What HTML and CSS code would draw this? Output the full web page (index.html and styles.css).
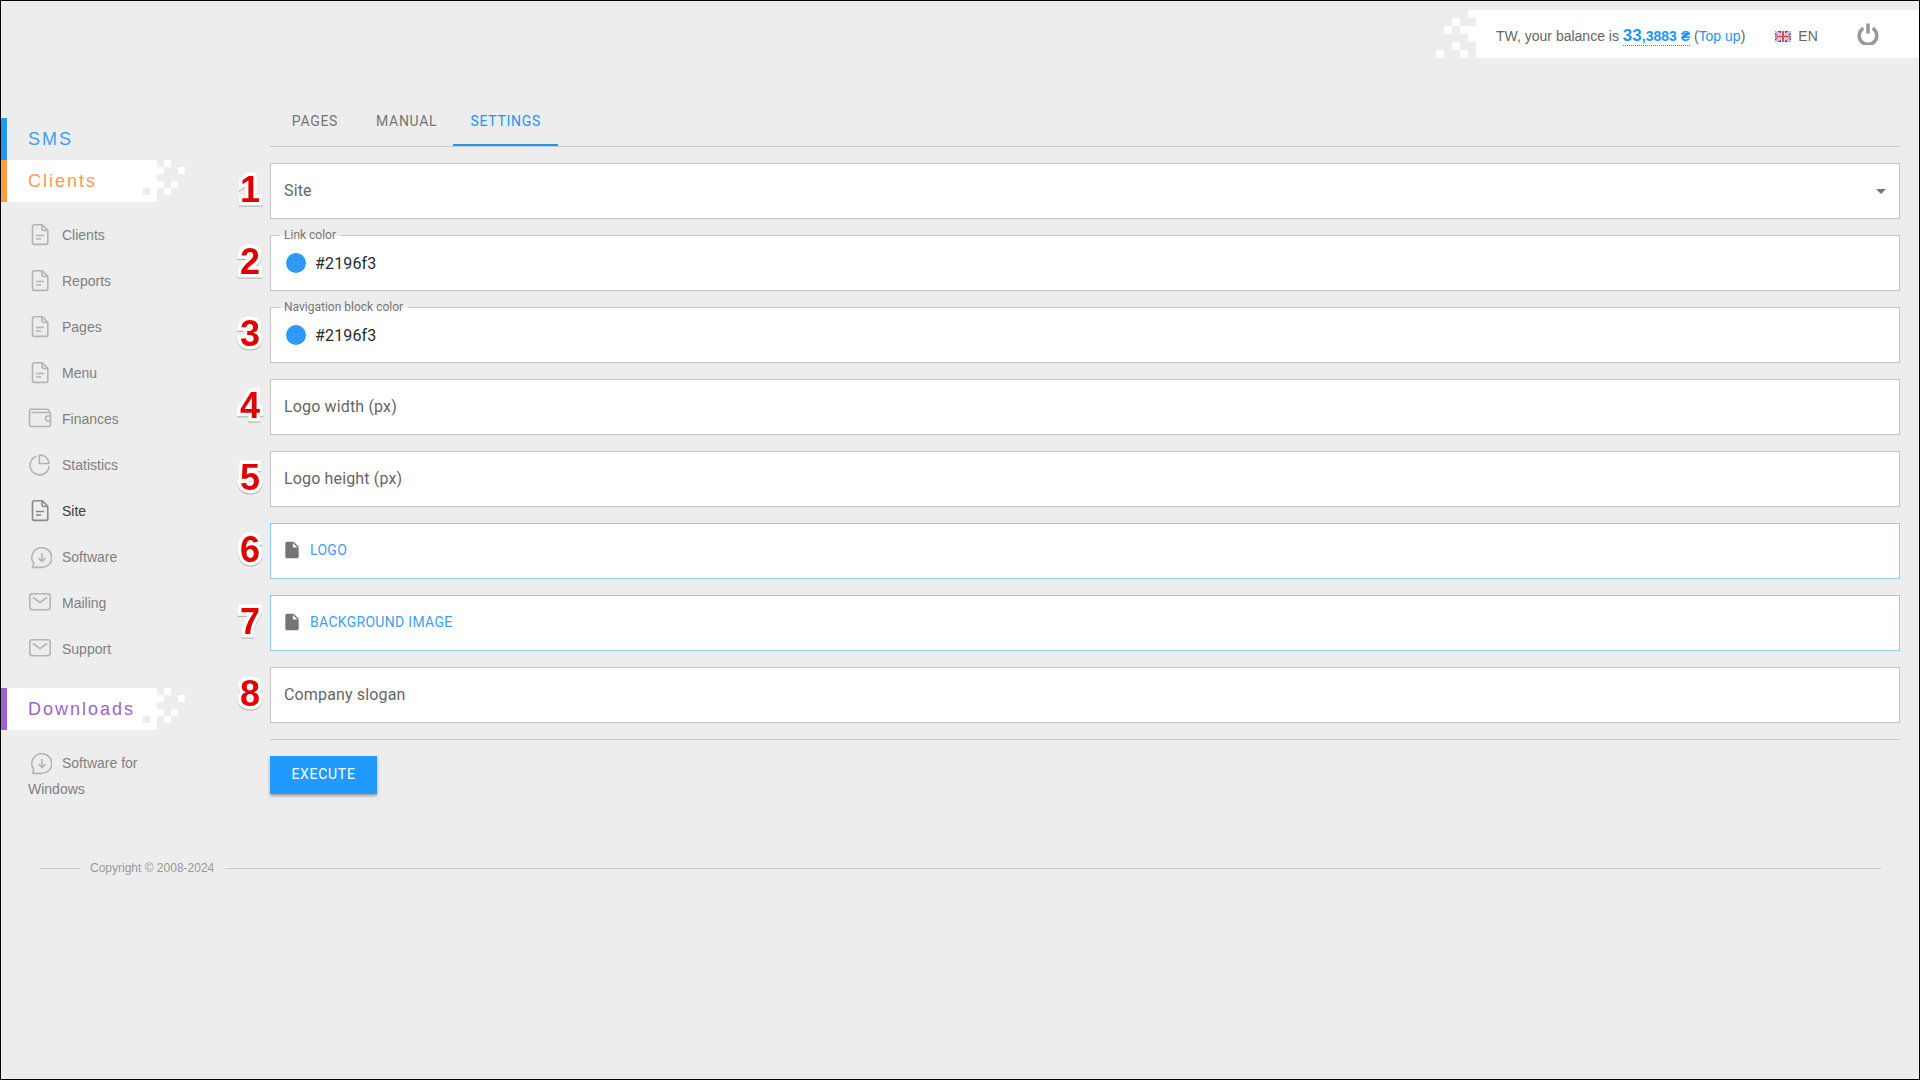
FILE: index.html
```html
<!DOCTYPE html>
<html lang="en">
<head>
<meta charset="utf-8">
<title>Site settings</title>
<link rel="stylesheet" href="styles.css">
</head>
<body>
<svg class="defs" aria-hidden="true">
  <symbol id="i-doc" viewBox="0 0 24 24"><path d="M6.5 1.8h7.7l5.6 5.6v12a2 2 0 0 1-2 2H6.500a2 2 0 0 1-2-2V3.800a2 2 0 0 1 2-2z"/><path d="M14 2v3.500a2 2 0 0 0 2 2h3.500"/><path d="M8 12.500h8M8 16h5"/></symbol>
  <symbol id="i-wallet" viewBox="0 0 24 24"><path d="M3 2.200h16a2 2 0 0 1 2 2V6"/><path d="M3.500 5.500H21a1.500 1.500 0 0 1 1.500 1.500v10.500a2 2 0 0 1-2 2h-17a2 2 0 0 1-2-2V4a2 2 0 0 1 2-2"/><path d="M22.500 9h-2.500a2 2 0 0 0 0 5h2.500"/></symbol>
  <symbol id="i-pie" viewBox="0 0 24 24"><path d="M8.300 3.300A9.600 9.600 0 1 0 21.200 13"/><path d="M11.300 2.200a8.800 8.800 0 0 1 9.700 8.300h-9.700z"/></symbol>
  <symbol id="i-down" viewBox="0 0 24 24"><path d="M14 2.800a9.800 9.800 0 0 1 0 19.600H5.500a1 1 0 0 1-.8-1.500l1.200-2.300A9.800 9.800 0 0 1 14 2.800z"/><path d="M14 8v8.500M10.500 13l3.500 3.500 3.500-3.500"/></symbol>
  <symbol id="i-mail" viewBox="0 0 24 24"><rect x="1.800" y="2.800" width="20.400" height="16" rx="2.500"/><path d="M5 6.500l7 5 7-5"/></symbol>
</svg>

<div class="page">
  <header class="topbar">
    <svg class="top-pixels" width="40" height="48" viewBox="0 0 40 48" aria-hidden="true">
      <path fill="#fff" d="M32 0h8v8h-8zM16 8h8v8h-8zM8 16h8v8H8zM24 16h16v8H24zM32 24h8v8h-8zM16 32h8v8h-8zM24 40h8v8h-8zM0 40h8v8H0z"/>
    </svg>
    <div class="top-panel">
      <span class="balance">TW, your balance is <a class="amount"><b class="amount-big">33</b><b>,3883 ₴</b></a> (<a class="topup">Top up</a>)</span>
      <svg class="flag" width="16" height="11" viewBox="0 0 16 11" aria-hidden="true">
        <rect width="16" height="11" fill="#3f51a5"/>
        <path d="M0 0l16 11M16 0L0 11" stroke="#fff" stroke-width="2.400"/>
        <path d="M0 0l16 11M16 0L0 11" stroke="#e8465a" stroke-width=".8"/>
        <path d="M8 0v11M0 5.500h16" stroke="#fff" stroke-width="3.600"/>
        <path d="M8 0v11M0 5.500h16" stroke="#e8465a" stroke-width="2"/>
      </svg>
      <span class="lang">EN</span>
      <svg class="power" width="22" height="22" viewBox="0 0 22 22" aria-hidden="true"><path d="M6.300 5.300a8.800 8.800 0 1 0 9.400 0"/><path d="M11 .5v10"/></svg>
    </div>
  </header>

  <div class="layout">
    <aside class="sidebar">
      <div class="heading heading-sms">SMS</div>
      <div class="heading heading-clients heading-light">Clients
        <svg class="side-pixels" width="42" height="42" viewBox="0 0 42 42" aria-hidden="true">
          <path fill="#fff" d="M0 0h14v42H0V35h7V28H0z"/>
          <path fill="#fff" d="M21 0h7v7h-7zM14 7h7v7h-7zM35 7h7v7h-7zM14 21h7v7h-7zM28 21h7v7h-7zM21 28h7v7h-7z"/>
        </svg>
      </div>
      <nav class="menu">
        <a class="item"><svg class="ico"><use href="#i-doc"/></svg>Clients</a>
        <a class="item"><svg class="ico"><use href="#i-doc"/></svg>Reports</a>
        <a class="item"><svg class="ico"><use href="#i-doc"/></svg>Pages</a>
        <a class="item"><svg class="ico"><use href="#i-doc"/></svg>Menu</a>
        <a class="item"><svg class="ico"><use href="#i-wallet"/></svg>Finances</a>
        <a class="item"><svg class="ico"><use href="#i-pie"/></svg>Statistics</a>
        <a class="item item-active"><svg class="ico"><use href="#i-doc"/></svg>Site</a>
        <a class="item"><svg class="ico"><use href="#i-down"/></svg>Software</a>
        <a class="item"><svg class="ico"><use href="#i-mail"/></svg>Mailing</a>
        <a class="item"><svg class="ico"><use href="#i-mail"/></svg>Support</a>
      </nav>
      <div class="heading heading-downloads heading-light">Downloads
        <svg class="side-pixels" width="42" height="42" viewBox="0 0 42 42" aria-hidden="true">
          <path fill="#fff" d="M0 0h14v42H0V35h7V28H0z"/>
          <path fill="#fff" d="M21 0h7v7h-7zM14 7h7v7h-7zM35 7h7v7h-7zM14 21h7v7h-7zM28 21h7v7h-7zM21 28h7v7h-7z"/>
        </svg>
      </div>
      <nav class="menu">
        <a class="item"><svg class="ico"><use href="#i-down"/></svg>Software for Windows</a>
      </nav>
    </aside>

    <main class="main">
      <div class="tabs">
        <a class="tab">PAGES</a>
        <a class="tab">MANUAL</a>
        <a class="tab tab-active">SETTINGS</a>
      </div>
      <form class="form">
        <div class="field field-select"><span class="num">1</span><span>Site</span><i class="caret"></i></div>
        <div class="field field-color"><span class="num">2</span><span class="legend">Link color</span><i class="swatch"></i><span class="value">#2196f3</span></div>
        <div class="field field-color"><span class="num">3</span><span class="legend">Navigation block color</span><i class="swatch"></i><span class="value">#2196f3</span></div>
        <div class="field"><span class="num">4</span><span>Logo width (px)</span></div>
        <div class="field"><span class="num">5</span><span>Logo height (px)</span></div>
        <div class="field field-file"><span class="num">6</span><svg class="file-ico" width="20" height="20" viewBox="0 0 24 24" aria-hidden="true"><path d="M6 2c-1.100 0-1.990.9-1.990 2L4 20c0 1.100.89 2 1.990 2H18c1.100 0 2-.9 2-2V8l-6-6H6zm7 7V3.500L18.500 9H13z"/></svg><span>LOGO</span></div>
        <div class="field field-file"><span class="num">7</span><svg class="file-ico" width="20" height="20" viewBox="0 0 24 24" aria-hidden="true"><path d="M6 2c-1.100 0-1.990.9-1.990 2L4 20c0 1.100.89 2 1.990 2H18c1.100 0 2-.9 2-2V8l-6-6H6zm7 7V3.500L18.500 9H13z"/></svg><span>BACKGROUND IMAGE</span></div>
        <div class="field"><span class="num">8</span><span>Company slogan</span></div>
      </form>
      <div class="actions">
        <button class="btn" type="button">EXECUTE</button>
      </div>
    </main>
  </div>

  <footer class="footer">
    <span class="foot-line foot-line-short"></span>
    <span class="copy">Copyright © 2008-2024</span>
    <span class="foot-line"></span>
  </footer>
</div>
</body>
</html>
```

FILE: styles.css
```css
* { box-sizing: border-box; }

html, body { margin: 0; padding: 0; }

body {
  background: #ededed;
  font-family: "Liberation Sans", Arial, sans-serif;
  font-size: 14px;
  color: #757575;
}

.defs { position: absolute; width: 0; height: 0; }

.page {
  width: 1920px;
  height: 1080px;
  border: 1px solid #000;
  overflow: hidden;
}

/* top bar */
.topbar {
  display: flex;
  justify-content: flex-end;
  margin-top: 9px;
  height: 48px;
}

.top-pixels { flex: none; display: block; }

.top-panel {
  width: 443px;
  flex: none;
  background: #fff;
  display: flex;
  align-items: center;
  padding: 4px 0 0 20px;
}

.balance { color: #666; white-space: nowrap; }

.amount {
  color: #2196f3;
  border-bottom: 1px dotted #2196f3;
  padding-bottom: 1px;
}

.amount-big { font-size: 17px; }

.topup { color: #2196f3; }

.flag { margin-left: 30px; margin-right: 7px; flex: none; }

.lang { color: #666; }

.power {
  margin: -4px 0 0 39px;
  flex: none;
  fill: none;
  stroke: #999;
  stroke-width: 3.500;
}

/* layout */
.layout {
  display: flex;
  margin-top: 40px;
}

.sidebar {
  width: 269px;
  flex: none;
  padding-top: 20px;
}

.heading {
  position: relative;
  height: 42px;
  width: 142px;
  padding-left: 21px;
  border-left: 6px solid;
  font-size: 18px;
  line-height: 42px;
  letter-spacing: 2px;
  white-space: nowrap;
}

.heading-light { background: #fff; }

.heading-sms { color: #3f9df5; border-left-color: #2196f3; }
.heading-clients { color: #ff9a52; border-left-color: #ff9a45; }
.heading-downloads { color: #9c63d1; border-left-color: #9c63d1; }

.side-pixels {
  position: absolute;
  left: 136px;
  top: 0;
}

.menu { margin: 10px 0 0; }

.menu + .heading { margin-top: 16px; }

.item {
  display: block;
  width: 190px;
  padding: 10px 0 10px 27px;
  line-height: 26px;
  color: #808080;
}

.item-active { color: #3a3a3a; }

.ico {
  display: inline-block;
  width: 24px;
  height: 24px;
  margin: -5px 10px -3px 0;
  vertical-align: middle;
  fill: none;
  stroke: #b4b4b4;
  stroke-width: 1.600;
}

.item-active .ico { stroke: #8a8a8a; }

/* main */
.main {
  flex: 1;
  min-width: 0;
  margin-right: 19px;
  font-family: Roboto, "Liberation Sans", sans-serif;
}

.tabs {
  display: flex;
  height: 49px;
  border-bottom: 1px solid #ccc;
}

.tab {
  display: flex;
  align-items: center;
  justify-content: center;
  min-width: 90px;
  height: 48px;
  padding: 0 16px 2px;
  color: #757575;
  letter-spacing: .7px;
}

.tab-active {
  color: #2196f3;
  border-bottom: 2px solid #2196f3;
  padding-bottom: 0;
  width: 105px;
}

.form {
  display: flex;
  flex-direction: column;
  gap: 16px;
  margin-top: 16px;
}

.field {
  position: relative;
  height: 56px;
  display: flex;
  align-items: center;
  padding: 0 0 2px 13px;
  background: #fff;
  border: 1px solid #c4c4c4;
  font-size: 16px;
  letter-spacing: .15px;
  color: #666;
}

.num {
  position: absolute;
  left: -41px;
  top: 50%;
  width: 40px;
  margin-top: -24px;
  text-align: center;
  font-family: "Liberation Sans", sans-serif;
  font-weight: 700;
  font-size: 36px;
  line-height: 46px;
  letter-spacing: 0;
  color: #e00000;
  -webkit-text-stroke: 7px #fff;
  paint-order: stroke fill;
  filter: drop-shadow(0 1px 0 #a8a8a8);
}

.field-select { justify-content: space-between; padding-right: 13px; }

.caret {
  width: 0;
  height: 0;
  margin-top: 2px;
  border-left: 5px solid transparent;
  border-right: 5px solid transparent;
  border-top: 5px solid #757575;
}

.field-color { padding: 0 0 0 15px; }

.legend {
  position: absolute;
  left: 8px;
  top: -8px;
  padding: 0 5px;
  font-size: 12px;
  line-height: 14px;
  letter-spacing: 0;
  color: #757575;
  background: linear-gradient(#ededed 57%, #fff 57%);
}

.swatch {
  width: 20px;
  height: 20px;
  border-radius: 50%;
  background: #2f9af5;
  margin-right: 9px;
}

.value { color: rgba(0, 0, 0, .87); }

.field-file {
  border-color: #90caf9;
  padding-left: 11px;
  font-size: 14px;
  letter-spacing: .3px;
  color: #3f9df5;
}

.file-ico { fill: #757575; margin-right: 8px; flex: none; }

.actions {
  margin-top: 16px;
  padding-top: 16px;
  border-top: 1px solid #ccc;
}

.btn {
  display: block;
  width: 107px;
  height: 38px;
  border: 0;
  padding: 0 0 2px;
  background: #219aff;
  color: #fff;
  font-family: Roboto, "Liberation Sans", sans-serif;
  font-size: 14px;
  letter-spacing: .7px;
  box-shadow: 0 2px 3px rgba(0, 0, 0, .35);
}

/* footer */
.footer {
  display: flex;
  align-items: center;
  gap: 10px;
  margin: 49px 38px 0 39px;
}

.foot-line { flex: 1; height: 1px; background: #ccc; }
.foot-line-short { flex: none; width: 40px; }

.copy { font-size: 12px; line-height: 14px; color: #999; white-space: nowrap; margin-right: 1px; }
```
